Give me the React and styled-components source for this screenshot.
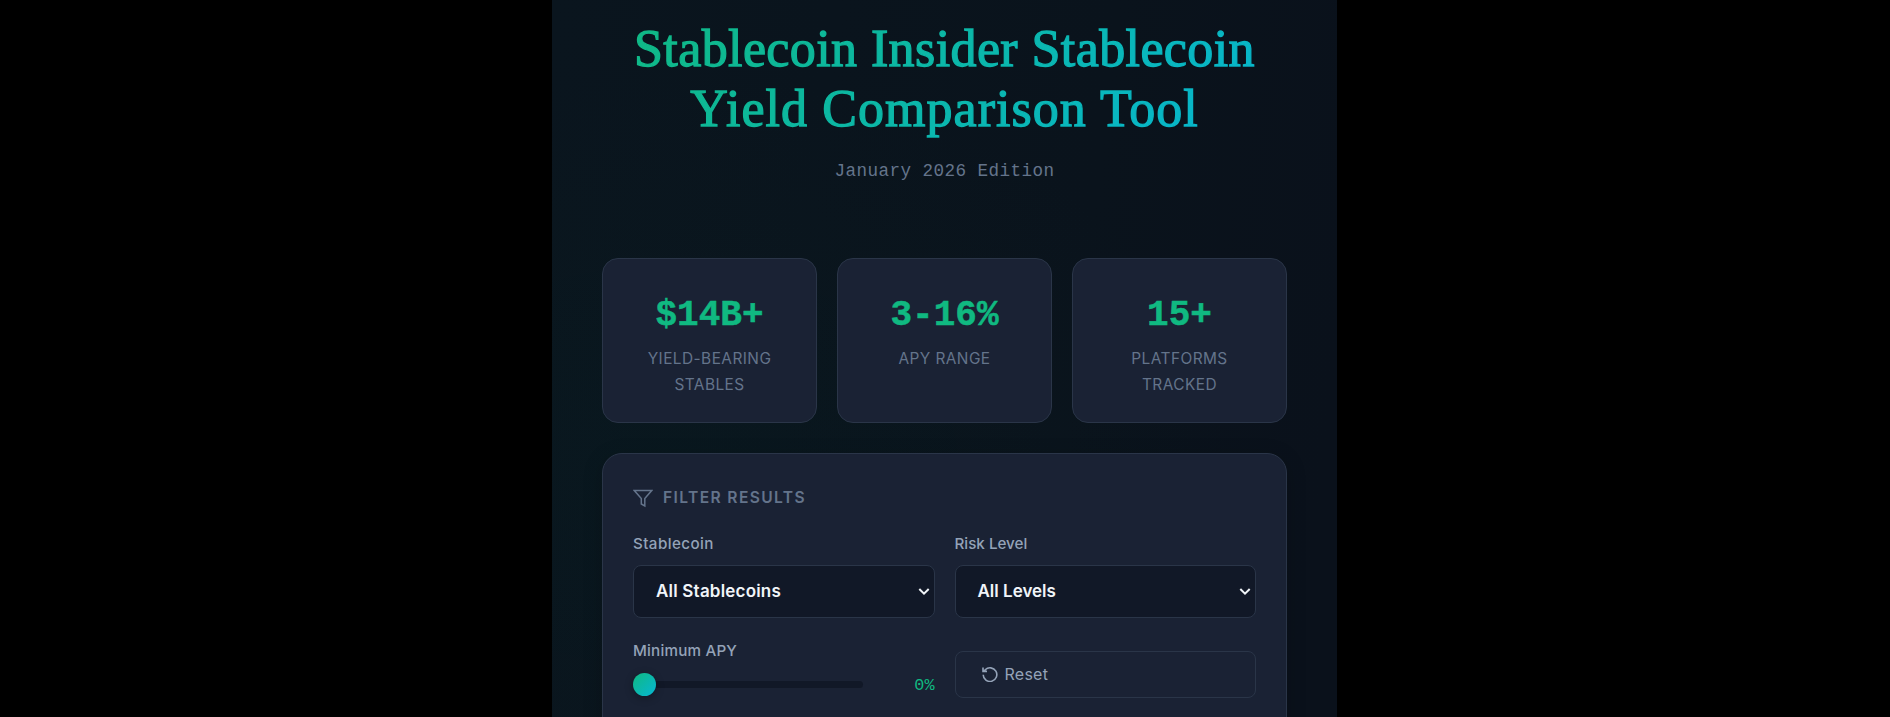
import React from 'react';
import styled, { createGlobalStyle } from 'styled-components';

const Global = createGlobalStyle`
  * { box-sizing: border-box; }
  html, body { margin: 0; background: #000; height: 717px; overflow: hidden; }
  body { font-family: Inter, "Liberation Sans", sans-serif; }
`;
const Page = styled.main`
  width: 785px;
  height: 717px;
  margin-left: 552px;
  padding: 19px 50px 0;
  overflow: hidden;
  background:
    radial-gradient(ellipse at 15% 65%, rgba(0, 50, 40, 0.1), transparent 60%),
    linear-gradient(97deg, #0a151e 0%, #0a131c 65%, #0a111b 95%);
`;
const Title = styled.h1`
  margin: 0;
  text-align: center;
  font: 400 52px/60px "Liberation Serif", serif;
  background: linear-gradient(135deg, #10b981 0%, #06b6d4 100%);
  -webkit-background-clip: text;
  background-clip: text;
  color: transparent;
  -webkit-text-stroke: 1.3px transparent;
`;
const TitleLine = styled.span`
  display: block;
  white-space: nowrap;
  letter-spacing: ${p => p.$spacing}px;
`;
const Edition = styled.p`
  margin: 17px 0 0;
  text-align: center;
  color: #64748b;
  font: 400 17.6px/30px "Liberation Mono", monospace;
  letter-spacing: 0.45px;
`;
const Stats = styled.section`
  display: grid;
  grid-template-columns: repeat(3, 1fr);
  gap: 20px;
  margin-top: 72px;
`;
const Stat = styled.article`
  height: 165px;
  padding: 28px 24px 0;
  border: 1px solid #2a3548;
  border-radius: 16px;
  background: #1a2234;
  text-align: center;
`;
const Value = styled.div`
  color: #10b981;
  font: 700 36px/58px "Liberation Mono", monospace;
  -webkit-text-stroke: 0.5px #10b981;
`;
const Caption = styled.div`
  margin-top: 1px;
  color: #64748b;
  font-size: 15.4px;
  line-height: 26px;
  letter-spacing: 0.45px;
  text-transform: uppercase;
`;
const Filters = styled.section`
  margin-top: 30px;
  height: 320px;
  padding: 30px;
  border: 1px solid #2a3548;
  border-radius: 20px;
  background: #1a2234;
  box-shadow: 0 4px 20px rgba(0, 0, 0, 0.18);
`;
const Heading = styled.h2`
  display: flex;
  align-items: center;
  gap: 10px;
  height: 27px;
  margin: 0;
  color: #64748b;
  font-size: 15.6px;
  font-weight: 600;
  letter-spacing: 1.38px;
  text-transform: uppercase;
`;
const Grid = styled.div`
  display: grid;
  grid-template-columns: 1fr 1fr;
  column-gap: 20px;
  margin-top: 20px;
`;
const Field = styled.div`
  height: 107px;
`;
const Label = styled.label`
  display: block;
  color: #94a3b8;
  font-size: 15.2px;
  font-weight: 500;
  line-height: 26px;
  letter-spacing: ${p => p.$spacing || 0}px;
`;
const SelectBox = styled.button`
  display: flex;
  align-items: center;
  justify-content: space-between;
  width: 100%;
  height: 53px;
  margin-top: 8px;
  padding: 0 3px 1px 22px;
  border: 1px solid #2a3548;
  border-radius: 8px;
  background: #111827;
  color: #f1f5f9;
  font: 600 17px Inter, sans-serif;
  letter-spacing: ${p => p.$spacing || 0}px;
`;
const Slider = styled.div`
  display: flex;
  align-items: center;
  height: 24px;
  margin-top: 8px;
`;
const Track = styled.div`
  display: flex;
  align-items: center;
  width: 230px;
  height: 7px;
  border-radius: 4px;
  background: #111827;
`;
const Thumb = styled.span`
  width: 23px;
  height: 23px;
  border-radius: 50%;
  background: linear-gradient(135deg, #10b981, #06b6d4);
  box-shadow: 0 2px 8px rgba(0, 0, 0, 0.3);
`;
const Percent = styled.output`
  margin-left: auto;
  padding-top: 4px;
  color: #10b981;
  font: 400 16.8px/24px "Liberation Mono", monospace;
`;
const Reset = styled.button`
  display: flex;
  align-items: center;
  gap: 7px;
  width: 100%;
  height: 47px;
  margin-top: 13px;
  padding: 0 25px 2px 26px;
  border: 1px solid #2a3548;
  border-radius: 8px;
  background: transparent;
  color: #94a3b8;
  font: 400 16px Inter, sans-serif;
  letter-spacing: 0.25px;
`;

const Funnel = () => (
  <svg width="20" height="20" viewBox="0 0 20 20" fill="none" stroke="currentColor" strokeWidth="1.5">
    <path d="M1.3 2.6H18.7L11.8 10.5V17.9L8.3 16V10.5Z" />
  </svg>
);
const Chevron = () => (
  <svg width="14" height="14" viewBox="0 0 14 14" fill="none" stroke="currentColor" strokeWidth="2">
    <path d="M2.3 5L7 9.7L11.7 5" />
  </svg>
);
const ResetIcon = () => (
  <svg width="16" height="16" viewBox="0 0 16 16" fill="none" stroke="currentColor" strokeWidth="1.6">
    <path d="M1.2 8.7A6.8 6.8 0 1 0 3.2 3.8L1 5.4M1 1.4V5.4H5" />
  </svg>
);

const stats = [
  ['$14B+', ['Yield-Bearing', 'Stables']],
  ['3-16%', ['APY Range']],
  ['15+', ['Platforms', 'Tracked']],
];

export default function App() {
  return (
    <>
      <Global />
      <Page>
        <Title>
          <TitleLine $spacing={0.4}>Stablecoin Insider Stablecoin</TitleLine>
          <TitleLine $spacing={1.05}>Yield Comparison Tool</TitleLine>
        </Title>
        <Edition>January 2026 Edition</Edition>
        <Stats>
          {stats.map(([value, lines]) => (
            <Stat key={value}>
              <Value>{value}</Value>
              <Caption>{lines.map(l => <div key={l}>{l}</div>)}</Caption>
            </Stat>
          ))}
        </Stats>
        <Filters>
          <Heading><Funnel />Filter Results</Heading>
          <Grid>
            <Field>
              <Label $spacing={0.4}>Stablecoin</Label>
              <SelectBox $spacing={0.2}>All Stablecoins<Chevron /></SelectBox>
            </Field>
            <Field>
              <Label>Risk Level</Label>
              <SelectBox>All Levels<Chevron /></SelectBox>
            </Field>
            <Field>
              <Label $spacing={0.2}>Minimum APY</Label>
              <Slider><Track><Thumb /></Track><Percent>0%</Percent></Slider>
            </Field>
            <Field>
              <Reset><ResetIcon />Reset</Reset>
            </Field>
          </Grid>
        </Filters>
      </Page>
    </>
  );
}
